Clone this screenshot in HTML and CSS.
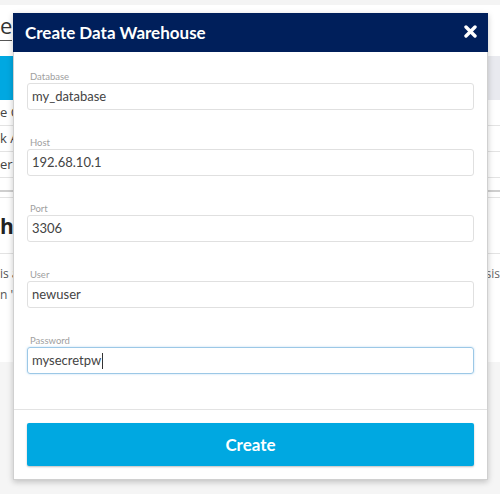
FILE: index.html
```html
<!DOCTYPE html>
<html>
<head>
<meta charset="utf-8">
<link rel="stylesheet" href="styles.css">
</head>
<body>
<div class="page">
  <div class="topstrip"></div>
  <div class="page-title"><span class="u">e</span></div>
  <div class="bar"><div class="bar-tab"></div><div class="bar-rest"></div></div>
  <div class="row">e Cr</div>
  <div class="row">k A</div>
  <div class="row">er a</div>
  <div class="sep-thick"></div>
  <div class="sep-thin"></div>
  <div class="section-title">ho</div>
  <div class="para">
    <div class="pline"><span>is a</span><span class="tail">ysis</span></div>
    <div class="pline"><span>n 'C</span></div>
  </div>
  <div class="footer-bg"></div>
</div>

<div class="modal">
  <div class="modal-header">
    <span class="modal-title">Create Data Warehouse</span>
    <svg class="close" width="13" height="13" viewBox="0 0 13 13"><path d="M2 2 L11 11 M11 2 L2 11" stroke="#fff" stroke-width="3.4" stroke-linecap="round"/></svg>
  </div>
  <div class="modal-body">
    <div class="field">
      <div class="label">Database</div>
      <div class="input">my_database</div>
    </div>
    <div class="field">
      <div class="label">Host</div>
      <div class="input">192.68.10.1</div>
    </div>
    <div class="field">
      <div class="label">Port</div>
      <div class="input">3306</div>
    </div>
    <div class="field">
      <div class="label">User</div>
      <div class="input">newuser</div>
    </div>
    <div class="field">
      <div class="label">Password</div>
      <div class="input focus">mysecretpw<span class="caret"></span></div>
    </div>
  </div>
  <div class="modal-footer">
    <div class="btn">Create</div>
  </div>
</div>
</body>
</html>
```

FILE: styles.css
```css
* { box-sizing: border-box; }
html, body { margin: 0; padding: 0; }
body {
  width: 500px;
  height: 494px;
  overflow: hidden;
  position: relative;
  font-family: "Open Sans", "Liberation Sans", sans-serif;
  color: #333;
  background: #fff;
}
.page { display: flex; flex-direction: column; height: 494px; }
.topstrip { height: 5px; background: #f4f4f4; flex: none; }
.page-title {
  height: 51px; flex: none;
  font-size: 22px; line-height: 40px; color: #333;
  white-space: nowrap; overflow: hidden;
}
.page-title .u { border-bottom: 1px solid #555; }
.bar { height: 44px; flex: none; display: flex; }
.bar-tab { width: 200px; background: #00a8e1; }
.bar-rest { flex: 1; background: #e9eaef; }
.row {
  height: 26px; flex: none;
  border-bottom: 1px solid #e3e3e3;
  font-size: 13px; line-height: 25px; white-space: nowrap; overflow: hidden;
  color: #444;
}
.sep-thick { height: 14px; flex: none; border-bottom: 2px solid #cfcfcf; }
.sep-thin { height: 6px; flex: none; border-bottom: 1px solid #e3e3e3; }
.section-title {
  height: 56px; flex: none;
  font-size: 21px; font-weight: 700; line-height: 56px; color: #222;
  border-bottom: 1px solid #e3e3e3;
  white-space: nowrap; overflow: hidden;
}
.para { height: 108px; flex: none; padding-top: 9px; font-size: 12px; color: #555; }
.pline { display: flex; justify-content: space-between; line-height: 21px; white-space: nowrap; }
.pline .tail { color: #666; }
.footer-bg { flex: 1; background: #f5f5f5; }

.modal {
  position: absolute;
  left: 13px; top: 13px;
  width: 475px; height: 467px;
  background: #fff;
  border: 1px solid #d0d0d0;
  box-shadow: 0 2px 6px rgba(0,0,0,0.22);
  display: flex; flex-direction: column;
}
.modal-header {
  height: 39px; flex: none;
  background: #001f5b;
  display: flex; align-items: center; justify-content: space-between;
  padding: 0 11px 0 12px;
  margin: -1px -1px 0 -1px;
}
.modal-title {
  color: #fff; font-size: 17px; font-weight: 700;
  font-family: "Lato", "Open Sans", sans-serif;
}
.close { display: block; margin-top: -2px; }
.modal-body { flex: 1; padding: 19px 13px 0 13px; }
.field { margin-bottom: 27px; }
.label {
  font-family: "Lato", "Open Sans", sans-serif;
  font-size: 9.5px; line-height: 12px; color: #a0a0a0; padding-left: 3px;
}
.input {
  height: 27px;
  border: 1px solid #e0e0e0;
  border-radius: 3px;
  font-family: "Lato", "Open Sans", sans-serif;
  font-size: 13px; line-height: 25px; color: #444;
  padding-left: 4px;
  display: flex; align-items: center;
}
.input.focus {
  border-color: #9cc8e6;
  box-shadow: 0 0 2px rgba(102,175,233,0.5);
}
.caret { display: inline-block; width: 1px; height: 16px; background: #333; margin-left: 1px; }
.modal-footer {
  flex: none;
  border-top: 1px solid #e3e3e3;
  padding: 13px;
}
.btn {
  height: 43px;
  background: #00a8e1;
  border-radius: 2px;
  box-shadow: 0 1px 2px rgba(0,0,0,0.25);
  color: #fff; font-size: 17px; font-weight: 700;
  font-family: "Lato", "Open Sans", sans-serif;
  display: flex; align-items: center; justify-content: center;
}
```
